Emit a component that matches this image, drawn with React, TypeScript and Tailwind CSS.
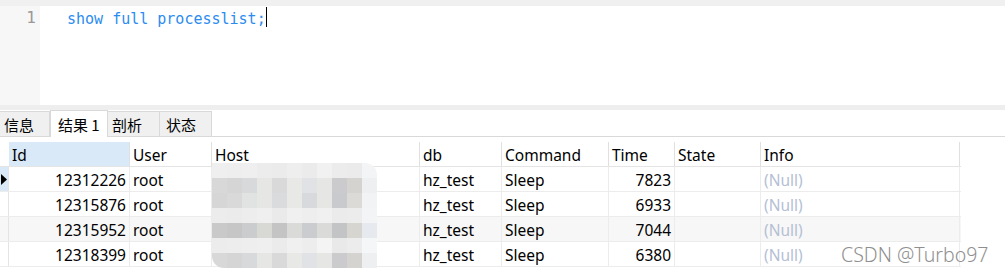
import React from "react";

const cols = [
  { key: "id", label: "Id", w: "w-[121px]", right: true },
  { key: "user", label: "User", w: "w-[82px]" },
  { key: "host", label: "Host", w: "w-[208px]" },
  { key: "db", label: "db", w: "w-[82px]" },
  { key: "command", label: "Command", w: "w-[107px]" },
  { key: "time", label: "Time", w: "w-[66px]", right: true },
  { key: "state", label: "State", w: "w-[86px]" },
  { key: "info", label: "Info", w: "w-[199px]" },
];

const rows = [
  { id: "12312226", user: "root", host: "", db: "hz_test", command: "Sleep", time: "7823", state: "", info: null },
  { id: "12315876", user: "root", host: "", db: "hz_test", command: "Sleep", time: "6933", state: "", info: null },
  { id: "12315952", user: "root", host: "", db: "hz_test", command: "Sleep", time: "7044", state: "", info: null },
  { id: "12318399", user: "root", host: "", db: "hz_test", command: "Sleep", time: "6380", state: "", info: null },
];

// mosaic over the Host column
const mosaic = [
  ["#efefef", "#eeeeee", "#efefef", "#ececec", "#ebebeb", "#eeeeee", "#ebebec", "#f1f1f1", "#ececec", "#ebebeb", "#f3f4f5"],
  ["#d8d8d8", "#d5d5d5", "#d8d9db", "#e6e6e4", "#d9d9d9", "#e8e8e6", "#e1e2e5", "#e6e6e4", "#cbcbcd", "#d4d3d0", "#eeeff1"],
  ["#d6d6d6", "#d9d9d9", "#e1e3e2", "#e6e6e4", "#dadbdd", "#e8e8e6", "#d8d9dc", "#e6e6e4", "#c9cacd", "#dcdad7", "#f2f3f5"],
  ["#ececec", "#ebebeb", "#ededee", "#efefef", "#eaeaea", "#f0f0f0", "#eeeeef", "#f0f0f0", "#ebebeb", "#ececec", "#f3f4f5"],
  ["#c9c9c9", "#c6c6c6", "#cbcccd", "#d8d8d5", "#c4c4c4", "#dadad8", "#cbccd0", "#dadad8", "#c3c4c6", "#d7d5d0", "#e6e9ee"],
  ["#ececec", "#ededed", "#eeeeee", "#efefef", "#ebebeb", "#f0f0f0", "#ededee", "#f4f4f4", "#e9e9e9", "#ececec", "#f5f6f7"],
  ["#d8d8d8", "#d5d5d5", "#d8d9db", "#e6e6e4", "#d9d9d9", "#e8e8e6", "#e1e2e5", "#e6e6e4", "#cbcbcd", "#d4d3d0", "#eeeff1"],
];

export default function App() {
  return (
    <div className="relative w-[1005px] h-[272px] overflow-hidden bg-white font-['Noto_Sans','Noto_Sans_CJK_SC',sans-serif] text-[15px] text-black">
      {/* top strip */}
      <div className="h-[6px] bg-[#f0f0f0]" />

      {/* editor */}
      <div className="flex h-[99px]">
        <div className="w-[40px] bg-[#f7f7f7] pr-[4px] pt-[2px] text-right text-[16px] leading-[20px] text-[#999999] font-['DejaVu_Sans_Mono',monospace]">
          1
        </div>
        <div className="flex-1 pl-[27px] pt-[1px]">
          <span className="text-[15px] leading-[20px] text-[#2b8cf0] font-['DejaVu_Sans_Mono',monospace]">show full processlist;</span>
          <span className="inline-block w-px h-[20px] bg-black align-top" />
        </div>
      </div>

      {/* separator */}
      <div className="h-[5px] bg-[#eeeeee]" />

      {/* tabs */}
      <div className="flex items-end h-[27px] border-b border-[#d9d9d9] font-['Noto_Sans_CJK_SC',sans-serif]">
        <div className="w-[50px] h-[25px] bg-[#f0f0f0] border border-b-0 border-l-0 border-[#d9d9d9] pl-[4px] leading-[25px]">信息</div>
        <div className="w-[58px] h-[27px] bg-white border border-b-0 border-[#d9d9d9] -mb-px pl-[7px] leading-[27px]">结果 1</div>
        <div className="w-[52px] h-[25px] bg-[#f0f0f0] border border-b-0 border-l-0 border-[#d9d9d9] pl-[4px] leading-[25px]">剖析</div>
        <div className="w-[52px] h-[25px] bg-[#f0f0f0] border border-b-0 border-l-0 border-[#d9d9d9] pl-[6px] leading-[25px]">状态</div>
      </div>

      {/* grid */}
      <div className="mt-[5px] w-[961px] text-[15.5px]">
        <div className="flex h-[25px] border-b border-[#e4e4e4]">
          <div className="w-[9px]" />
          {cols.map((c) => (
            <div
              key={c.key}
              className={`${c.w} ${c.key === "id" ? "bg-[#d9e9f8]" : ""} border-r border-[#e0e0e0] pl-[3px] pt-[2px] leading-[22px] whitespace-nowrap`}
            >
              {c.label}
            </div>
          ))}
        </div>
        {rows.map((r, i) => (
          <div key={r.id} className={`flex h-[25px] border-b border-[#ececec] ${i === 2 ? "bg-[#f7f7f7]" : ""}`}>
            <div className={`w-[9px] flex items-center border-r border-[#e4e4e4] ${i === 0 ? "bg-[#d9e9f8]" : ""}`}>
              {i === 0 && (
                <svg width="7" height="11" viewBox="0 0 7 11" className="ml-[1px]">
                  <path d="M0 0 L6 5.5 L0 11 Z" fill="#000" />
                </svg>
              )}
            </div>
            {cols.map((c) => {
              const v = (r as Record<string, string | null>)[c.key];
              return (
                <div
                  key={c.key}
                  className={`${c.w} border-r border-[#ececec] pt-[2px] leading-[22px] whitespace-nowrap ${c.right ? "text-right pr-[3px]" : "pl-[3px]"}`}
                >
                  {v === null ? <span className="text-[#b4c0d4]">(Null)</span> : v}
                </div>
              );
            })}
          </div>
        ))}
      </div>

      {/* host mosaic */}
      <div className="absolute left-[212px] top-[163px] w-[165px] overflow-hidden rounded-tr-[12px] rounded-bl-[12px]">
        {mosaic.map((row, ri) => (
          <div key={ri} className="flex">
            {row.map((color, ci) => (
              <div key={ci} className="w-[15px] h-[15px]" style={{ backgroundColor: color }} />
            ))}
          </div>
        ))}
      </div>

      {/* watermark */}
      <div className="absolute left-[841px] top-[242px] text-[19.5px] leading-[26px] text-[#8f8f8f] font-['Noto_Sans',sans-serif] font-light">
        CSDN @Turbo97
      </div>
    </div>
  );
}
